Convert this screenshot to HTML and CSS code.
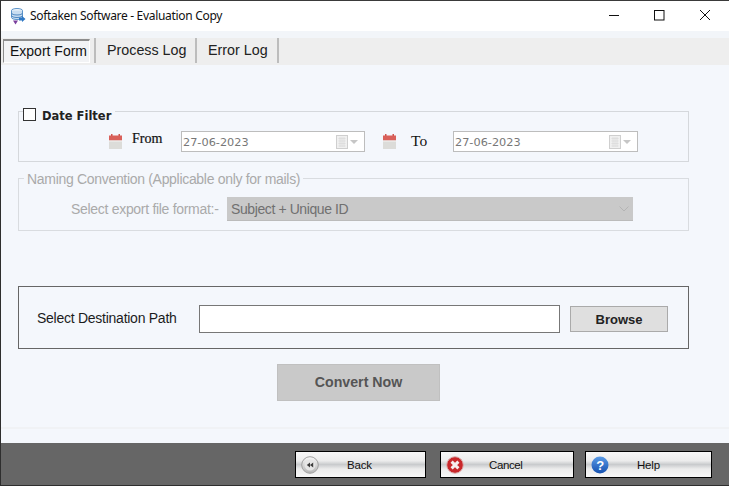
FILE: index.html
```html
<!DOCTYPE html>
<html lang="en">
<head>
<meta charset="utf-8">
<title>Softaken Software - Evaluation Copy</title>
<link rel="stylesheet" href="styles.css">
</head>
<body>
<div class="window">
  <header class="titlebar">
    <svg class="app-icon" width="16" height="17" viewBox="0 0 16 17">
      <ellipse cx="7" cy="2.500" rx="5.500" ry="2" fill="#eef4fa" stroke="#5b93c9"/>
      <path d="M1.500 2.500v7c0 1.200 2.500 2 5.500 2s5.500-.8 5.500-2v-7" fill="#c9ddf0" stroke="#5b93c9"/>
      <path d="M1.500 5c0 1.200 2.500 2 5.500 2s5.500-.8 5.500-2M1.500 7.500c0 1.200 2.500 2 5.500 2s5.500-.8 5.500-2" fill="none" stroke="#4f88c2"/>
      <path d="M9 9.500h3v-1.500l3.500 3-3.500 3v-1.500H9z" fill="#2f78c4"/>
      <path d="M3 12.500h5l-2.500 4z" fill="#7a3f9d"/>
    </svg>
    <span class="title-text">Softaken Software - Evaluation Copy</span>
    <div class="win-controls">
      <svg width="12" height="12" viewBox="0 0 12 12"><path d="M0 6.500h10" stroke="#111" fill="none"/></svg>
      <svg width="12" height="12" viewBox="0 0 12 12"><rect x=".5" y="1.500" width="9.500" height="9.500" stroke="#111" fill="none"/></svg>
      <svg width="12" height="12" viewBox="0 0 12 12"><path d="M1 1l10 10M11 1L1 11" stroke="#111" fill="none"/></svg>
    </div>
  </header>

  <nav class="tabs">
    <div class="tab tab-active">Export Form</div>
    <div class="tab tab-process">Process Log</div>
    <div class="tab tab-error">Error Log</div>
  </nav>

  <main class="content">
    <section class="group date-group">
      <label class="legend date-legend"><span class="check"></span><span>Date Filter</span></label>
      <div class="date-row">
        <svg class="cal" width="13" height="15" viewBox="0 0 13 15"><rect y="3" width="13" height="12" fill="#dcdcd9"/><rect y="1.500" width="13" height="5" fill="#d9605a"/><rect y="6.500" width="13" height="1" fill="#f4f4f4"/><rect x="2" y="0" width="1.500" height="2" fill="#d0554e"/><rect x="9.500" y="0" width="1.500" height="2" fill="#d0554e"/></svg>
        <span class="date-label from">From</span>
        <div class="date-input"><span>27-06-2023</span>
          <svg width="23" height="14" viewBox="0 0 23 14"><rect x=".5" y=".5" width="11" height="13" fill="#f0f0f0" stroke="#cfcfcf"/><path d="M2.500 3.500h7M2.500 6h7M2.500 8.500h7M2.500 11h7M4 2v10M6 2v10M8 2v10" stroke="#dedede"/><path d="M14 5h8l-4 4z" fill="#c6c6c6"/></svg>
        </div>
        <svg class="cal cal-to" width="13" height="15" viewBox="0 0 13 15"><rect y="3" width="13" height="12" fill="#dcdcd9"/><rect y="1.500" width="13" height="5" fill="#d9605a"/><rect y="6.500" width="13" height="1" fill="#f4f4f4"/><rect x="2" y="0" width="1.500" height="2" fill="#d0554e"/><rect x="9.500" y="0" width="1.500" height="2" fill="#d0554e"/></svg>
        <span class="date-label to">To</span>
        <div class="date-input date-input-to"><span>27-06-2023</span>
          <svg width="23" height="14" viewBox="0 0 23 14"><rect x=".5" y=".5" width="11" height="13" fill="#f0f0f0" stroke="#cfcfcf"/><path d="M2.500 3.500h7M2.500 6h7M2.500 8.500h7M2.500 11h7M4 2v10M6 2v10M8 2v10" stroke="#dedede"/><path d="M14 5h8l-4 4z" fill="#c6c6c6"/></svg>
        </div>
      </div>
    </section>

    <section class="group naming-group">
      <div class="legend naming-legend">Naming Convention (Applicable only for mails)</div>
      <div class="naming-row">
        <span class="format-label">Select export file format:-</span>
        <div class="select"><span>Subject + Unique ID</span>
          <svg width="10" height="6" viewBox="0 0 10 6"><path d="M.5.500l4.500 4.500 4.500-4.500" fill="none" stroke="#b4b4b4"/></svg>
        </div>
      </div>
    </section>

    <section class="dest">
      <span class="dest-label">Select Destination Path</span>
      <div class="dest-input"></div>
      <button class="browse" type="button">Browse</button>
    </section>

    <div class="convert-row"><button class="convert" type="button">Convert Now</button></div>
  </main>

  <footer class="footer">
    <button class="fbtn fbtn-back" type="button">
      <svg width="18" height="18" viewBox="0 0 18 18"><defs><linearGradient id="gb" x1="0" y1="0" x2="0" y2="1"><stop offset="0" stop-color="#f8f8f8"/><stop offset="1" stop-color="#b4b4b4"/></linearGradient></defs><circle cx="9" cy="9" r="8.300" fill="url(#gb)" stroke="#a0a0a0"/><circle cx="9" cy="9" r="5.500" fill="#e6e6e6"/><path d="M9 6.500v5L5.800 9zM12.200 6.500v5L9 9z" fill="#3d3d3d"/></svg>
      <span>Back</span>
    </button>
    <button class="fbtn fbtn-cancel" type="button">
      <svg width="18" height="18" viewBox="0 0 18 18"><circle cx="9" cy="9" r="8.300" fill="#c9282b" stroke="#dcb0b0"/><path d="M5.600 5.600l6.800 6.800M12.400 5.600l-6.800 6.800" stroke="#f6eeee" stroke-width="3"/></svg>
      <span>Cancel</span>
    </button>
    <button class="fbtn fbtn-help" type="button">
      <svg width="18" height="18" viewBox="0 0 18 18"><defs><linearGradient id="gh" x1="0" y1="0" x2="0" y2="1"><stop offset="0" stop-color="#5b9be6"/><stop offset="1" stop-color="#1450b0"/></linearGradient></defs><circle cx="9" cy="9" r="8.500" fill="url(#gh)"/><text x="9" y="14" text-anchor="middle" class="help-mark">?</text></svg>
      <span>Help</span>
    </button>
  </footer>
</div>
</body>
</html>
```

FILE: styles.css
```css
* { box-sizing: border-box; }
html, body { margin: 0; padding: 0; }
body { width: 729px; height: 486px; overflow: hidden; font-family: "Liberation Sans", Arial, sans-serif; }

.window {
  width: 729px; height: 486px;
  display: flex; flex-direction: column;
  border-top: 1px solid #3a3a3a;
  border-left: 1px solid #2e2e2e;
  border-bottom: 1px solid #2e2e2e;
  background: #f2f5f9;
}

.titlebar {
  height: 30px; flex: none;
  display: flex; align-items: center;
  background: #fff;
  padding: 0 0 2px 9px;
}
.app-icon { flex: none; margin-top: 2px; }
.title-text { margin-left: 4px; font: 12px "Noto Sans", "Open Sans", sans-serif; letter-spacing: -.31px; color: #111; }
.win-controls { margin-left: auto; display: flex; gap: 33px; padding-right: 18px; }

.tabs {
  height: 27px; flex: none;
  margin-top: 7px;
  display: flex; align-items: flex-start;
  background: #eeeeee;
  font-size: 14.300px; color: #222;
}
.tab { height: 25px; padding-bottom: 2px; display: flex; align-items: center; border-right: 2px solid #bdbdbd; }
.tab-active {
  width: 87px; height: 24px; margin: 1px 5px 0 2px;
  padding: 0 0 1px 6px;
  background: #f2f3f5;
  border: 1px solid #8d8d8d;
  border-right-color: #fff; border-bottom-color: #fff;
  border-top-width: 2px;
  font-size: 14px;
  color: #111;
}
.tab-active + .tab { border-left: 2px solid #bdbdbd; margin-left: -1px; }
.tab-process { width: 103px; padding-left: 11px; }
.tab-error { width: 82px; padding-left: 11px; }

.content {
  flex: 1; min-height: 0;
  padding: 46px 40px 0 17px;
  background: linear-gradient(#f0f2f5, #f0f2f5) 0 362px / 100% 2px no-repeat, #f4f7fc;
}

.group { position: relative; width: 671px; border: 1px solid #d5d8dc; }
.legend { position: absolute; background: #f4f7fc; }

.date-group { height: 51px; }
.date-legend {
  top: -3px; left: 4px; padding-right: 4px; height: 13px;
  display: flex; align-items: center; gap: 6px;
  font: bold 11.500px "DejaVu Sans", Verdana, sans-serif; color: #222;
}
.check { width: 13px; height: 13px; margin-top: -2px; background: #fff; border: 1px solid #333; }
.date-row { display: flex; align-items: center; padding: 19px 0 0 90px; }
.cal { flex: none; }
.cal-to { margin-left: 18px; }
.date-label { font: 14px "Liberation Serif", "Times New Roman", serif; color: #111; }
.from { width: 59px; padding-left: 10px; margin-top: -5px; -webkit-text-stroke: .2px #111; }
.to { width: 57px; padding-left: 15px; margin-top: -2px; font-size: 15.500px; }
.date-input {
  width: 184px; height: 21px; flex: none;
  display: flex; align-items: center; justify-content: space-between;
  padding: 0 5px 0 1px;
  background: #fff; border: 1px solid #bdbdbd;
  font: 11.300px "DejaVu Sans", Verdana, sans-serif; color: #777;
}
.date-input-to { width: 185px; }
.date-input span { padding-top: 1px; }

.naming-group { height: 53px; margin-top: 16px; border-color: #d9dce0; }
.naming-legend {
  top: -7px; left: 5px; padding: 0 3px;
  font-size: 14px; letter-spacing: -.31px; line-height: 15px; color: #aaa; white-space: nowrap;
}
.naming-row { display: flex; align-items: center; padding: 18px 0 0 52px; }
.format-label { width: 156px; font-size: 14px; letter-spacing: -.3px; color: #aaa; white-space: nowrap; }
.select {
  width: 406px; height: 24px;
  display: flex; align-items: center; justify-content: space-between;
  padding: 0 4px 0 4px;
  background: #c9c9c9; border-bottom: 1px solid #bbb;
  font-size: 14px; letter-spacing: -.4px; color: #707070;
}

.dest {
  width: 671px; height: 63px; margin-top: 55px;
  display: flex; align-items: center;
  padding: 3px 0 0 18px;
  border: 1px solid #666;
}
.dest-label { width: 162px; margin-top: -2px; font-size: 14px; letter-spacing: -.26px; color: #1c1c1c; white-space: nowrap; }
.dest-input { width: 361px; height: 28px; background: #fff; border: 1px solid #777; }
.browse {
  width: 98px; height: 26px; margin-left: 10px; padding: 0;
  background: #dfdfdf; border: 1px solid #aaa;
  font: bold 13px "Liberation Sans", Arial, sans-serif; color: #222;
}

.convert-row { padding: 15px 0 0 259px; }
.convert {
  display: block; width: 163px; height: 37px; padding: 0 0 2px;
  background: #c9c9c9; border: 1px solid #c0c0c0;
  font: bold 14.200px "Liberation Sans", Arial, sans-serif; color: #555;
}

.footer {
  height: 42px; flex: none;
  display: flex; align-items: flex-start;
  padding: 8px 0 0 294px;
  background: #666;
}
.fbtn {
  position: relative;
  height: 27px; padding: 0;
  display: flex; align-items: center;
  border: 1px solid #000;
  background: linear-gradient(#f7f7f7 0, #ececec 35%, #c9cbcd 50%, #ececec 68%, #f7f7f7 100%);
  font: 11.500px "Liberation Sans", Arial, sans-serif; letter-spacing: -.2px; color: #111;
}
.fbtn svg { flex: none; margin-left: 5px; }
.fbtn span { flex: 1; }
.fbtn-back { width: 131px; }
.fbtn-back span { text-align: left; padding-left: 28px; }
.fbtn-cancel { width: 134px; margin-left: 14px; letter-spacing: -.4px; }
.fbtn-cancel span { text-align: left; padding-left: 25px; }
.fbtn-help { width: 127px; margin-left: 11px; }
.fbtn-help span { text-align: left; padding-left: 28px; }
.help-mark { font: bold 13px "Liberation Sans", Arial, sans-serif; fill: #fff; }
```
